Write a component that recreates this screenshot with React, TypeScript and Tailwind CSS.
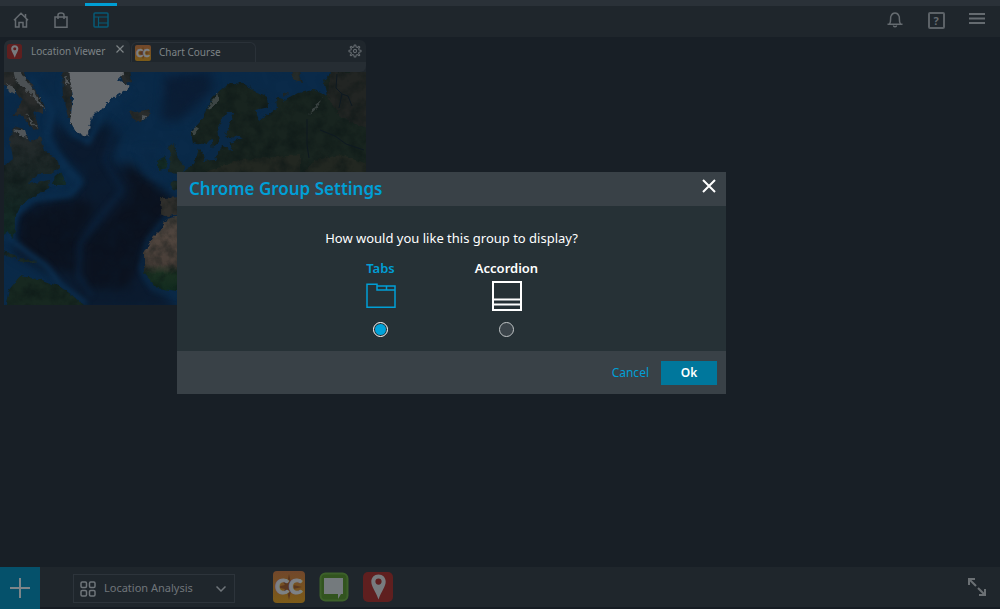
import { useState, type ReactNode } from "react";

function Pin({ className }: { className: string }) {
  return (
    <svg viewBox="0 0 30 30" className={className} aria-hidden="true">
      <rect width="30" height="30" rx="5" fill="#5f1f1f" />
      <path
        fillRule="evenodd"
        d="M15.5 2.5c-4.4 0-7.2 3.2-7.2 7.2 0 4.6 4.2 9.400 7.200 17.800 3-8.400 7.200-13.200 7.200-17.800 0-4-2.800-7.200-7.200-7.200zm0 4a3 3 0 1 1 0 6.200 3 3 0 0 1 0-6.200z"
        fill="#777b7e"
      />
    </svg>
  );
}

function ChartCourseIcon({ className }: { className: string }) {
  return (
    <svg viewBox="0 0 32 32" className={className} aria-hidden="true">
      <defs>
        <linearGradient id="cc" x1="0" y1="0" x2="0" y2="1">
          <stop offset="0" stopColor="#71472b" />
          <stop offset="1" stopColor="#7c5b18" />
        </linearGradient>
      </defs>
      <rect width="32" height="32" rx="4" fill="url(#cc)" />
      <path d="M16 3l2 9 6-4-4 6 9 2-9 2 4 6-6-4-2 9-2-9-6 4 4-6-9-2 9-2-4-6 6 4z" fill="#59371f" />
      <text
        x="16"
        y="23"
        textAnchor="middle"
        fontFamily="Lato, sans-serif"
        fontWeight="900"
        fontSize="21"
        fill="#7d8185"
        stroke="#7d8185"
        strokeWidth="1"
      >
        CC
      </text>
    </svg>
  );
}

function ChatIcon() {
  return (
    <svg viewBox="0 0 30 30" className="size-[30px]" aria-hidden="true">
      <rect x="1.500" y="1.500" width="27" height="27" rx="5" fill="#32541f" stroke="#3d612a" strokeWidth="2" />
      <path d="M5 6h19v16h-2l-3 5v-5H5z" fill="#747a7d" />
    </svg>
  );
}

function WorldMap() {
  return (
    <svg
      viewBox="4 72 362 233"
      preserveAspectRatio="xMinYMin slice"
      className="block w-full"
      role="img"
      aria-label="Satellite map of the North Atlantic"
    >
      <defs>
        <filter id="soft" x="-30%" y="-30%" width="160%" height="160%" colorInterpolationFilters="sRGB">
          <feGaussianBlur stdDeviation="5" />
        </filter>
        <filter id="softer" x="-30%" y="-30%" width="160%" height="160%" colorInterpolationFilters="sRGB">
          <feGaussianBlur stdDeviation="2.500" />
        </filter>
        <filter id="coast" x="-5%" y="-5%" width="110%" height="110%" colorInterpolationFilters="sRGB">
          <feTurbulence type="fractalNoise" baseFrequency="0.16" numOctaves="3" seed="4" result="n" />
          <feDisplacementMap in="SourceGraphic" in2="n" scale="5" xChannelSelector="R" yChannelSelector="G" result="d" />
          <feTurbulence type="fractalNoise" baseFrequency="0.08" numOctaves="4" seed="8" />
          <feColorMatrix values="0 0 0 0 0.04  0 0 0 0 0.08  0 0 0 0 0.08  0 1.200 0 0 -0.450" />
          <feComposite operator="in" in2="d" result="shade" />
          <feMerge>
            <feMergeNode in="d" />
            <feMergeNode in="shade" />
          </feMerge>
        </filter>
        <filter id="ice" x="-5%" y="-5%" width="110%" height="110%" colorInterpolationFilters="sRGB">
          <feTurbulence type="fractalNoise" baseFrequency="0.2" numOctaves="3" seed="4" result="n" />
          <feDisplacementMap in="SourceGraphic" in2="n" scale="6" xChannelSelector="R" yChannelSelector="G" />
        </filter>
        <filter id="sea" x="0" y="0" width="100%" height="100%" colorInterpolationFilters="sRGB">
          <feTurbulence type="fractalNoise" baseFrequency="0.05" numOctaves="5" seed="12" />
          <feColorMatrix values="0 0 0 0 0.04  0 0 0 0 0.14  0 0 0 0 0.23  0 1.200 0 0 -0.450" />
        </filter>
        <linearGradient id="canada" x1="0" y1="0" x2="0" y2="1">
          <stop offset="0" stopColor="#282c2e" />
          <stop offset="0.450" stopColor="#1a2625" />
          <stop offset="1" stopColor="#102b25" />
        </linearGradient>
        <linearGradient id="africa" x1="0" y1="0" x2="0" y2="1">
          <stop offset="0" stopColor="#3d3a36" />
          <stop offset="0.250" stopColor="#51463f" />
          <stop offset="0.640" stopColor="#483e38" />
          <stop offset="0.760" stopColor="#1a3021" />
          <stop offset="1" stopColor="#102a1e" />
        </linearGradient>
      </defs>

      <rect x="4" y="72" width="362" height="233" fill="#0a2a49" />
      <g filter="url(#soft)">
        <path d="M50 118L72 136L104 122L120 134L110 160L145 178L175 200L160 245L142 275L180 310L80 310L50 275L14 255L13 222L32 200L72 196L84 178L58 152Z" fill="#0b1a2e" />
        <path d="M18 215L70 198L95 205L80 240L80 275L50 268L20 250Z" fill="#0b121f" />
        <path d="M125 160L175 200L148 240L128 290L85 290L84 240L108 220L130 195Z" fill="#0b121f" />
        <path d="M165 76L210 72L212 90L180 120L162 120Z" fill="#0b1d35" />
      </g>
      <g filter="url(#softer)" fill="none" strokeLinejoin="round">
        <path d="M130 112L112 136L104 160L122 190L96 222L80 244L78 275L92 296" stroke="#0b2946" strokeWidth="5" opacity="0.450" />
        <path d="M160 150L140 150L148 172L166 180" stroke="#0b2c4b" strokeWidth="8" opacity="0.600" />
        <path d="M6 236L28 253L46 266L60 284L86 304" stroke="#0c2f50" strokeWidth="5" />
        <path d="M30 76L52 112L46 138L66 168L80 182L70 194L34 198L16 212L10 240" stroke="#0b2e4f" strokeWidth="6" />
        <path d="M168 215L148 240L141 268L152 288L177 294" stroke="#0b2946" strokeWidth="4" />
        <path d="M64 76L62 108L74 134L88 142L106 108L132 92" stroke="#0b2d4d" strokeWidth="6" />
      </g>
      <rect x="4" y="72" width="362" height="233" filter="url(#sea)" opacity="0.350" />

      <g filter="url(#coast)">
        <path d="M3 70L22 70L31 84L45 107L42 114L34 110L39 130L30 127L21 114L13 116L22 101L14 90L3 84Z" fill="#292b2b" />
        <path d="M13 127L24 130L30 142L40 137L44 151L56 158L60 167L50 174L38 174L27 184L41 182L50 180L49 188L34 196L21 205L15 218L14 240L8 232L2 236L2 168L13 158L10 140Z" fill="url(#canada)" />
        <path d="M53 185L55 176L61 171L66 185Z" fill="#132a27" />
        <path d="M62 70L72 70L72 126L66 110L63 96Z" fill="#262a2b" />
        <path d="M118 70L130 70L132 82L124 84Z" fill="#262a2b" />
        <path d="M129 110L136 112L150 109L149 117L140 122L132 119Z" fill="#292c2c" />
        <path d="M168 148L174 143L176 156L184 166L182 173L168 172L172 160Z" fill="#1b2925" />
        <path d="M158 160L166 156L167 168L158 171Z" fill="#132b25" />
        <path d="M160 198L184 197L184 214L168 216L161 213Z" fill="#302f2c" />
        <path d="M170 184L184 174L184 192L174 190Z" fill="#1a2a26" />
        <path d="M167 219L184 215L184 292L157 288L144 273L144 252L153 237L162 228Z" fill="url(#africa)" />
        <path d="M5 308L9 290L20 276L42 280L60 287L72 295L86 308Z" fill="#172820" />
        <path d="M3 250L14 255L18 259L6 256Z M19 258L38 261L30 263L18 261Z" fill="#1b2b28" />
        <path d="M191 132L200 122L213 97L230 83L243 84L267 98L268 107L256 110L260 120L277 108L276 97L286 100L299 93L313 90L328 96L324 80L333 70L370 70L370 310L185 310L178 176L194 164L199 149L205 157L213 151L212 140L203 145L193 143Z" fill="#18241f" />
        <path d="M291 72L299 72L303 83L294 80Z M284 92L288 94L284 97Z" fill="#252b29" />
        <path d="M330 72L368 72L368 130L340 116L328 96Z" fill="#222523" />
        <path d="M304 172L315 160L340 155L368 164L368 176Z M205 172L240 160L300 155L300 174Z" fill="#262922" opacity="0.700" />
      </g>
      <g filter="url(#ice)">
        <path d="M227 112L234 112L229 126L225 137L242 138L230 143L231 151L222 146L215 160L203 161L210 150L219 142L217 128Z" fill="#0a2947" />
        <path d="M69 70L127 70L118 80L131 87L111 99L101 110L92 115L87 138L76 132L70 122L73 98Z" fill="#65696d" />
        <path d="M13 70L22 72L38 98L46 110L39 104L27 90L16 82Z M6 82L17 91L14 94L6 89Z M26 113L39 130L31 123Z" fill="#4b5053" />
        <path d="M141 116L147 117L142 121Z M65 76L69 82L66 86Z M13 129L25 131L27 137L20 135Z" fill="#505559" />
      </g>
      <g filter="url(#ice)" opacity="0.700">
        <path d="M217 93L219 99L212 110L208 109Z M192 130L199 127L196 136L193 136Z" fill="#4e5555" />
        <path d="M323 99L316 109L309 115L314 107Z" fill="#4a5151" />
      </g>
      <path d="M337 74L336 88L342 94L339 108M342 94L348 96L352 106M320 130L335 136L346 144L364 150M307 119L307 145L309 158" fill="none" stroke="#0e1921" strokeWidth="1" />
    </svg>
  );
}

function NavButton({ label, active, children }: { label: string; active?: boolean; children: ReactNode }) {
  return (
    <button
      type="button"
      aria-label={label}
      className={`relative flex h-7 w-8 items-center justify-center ${active ? "text-[#075a76]" : "text-[#656b70]"}`}
    >
      {active && <span className="absolute inset-x-0 -top-[3px] h-[3px] bg-[#009ed4]" />}
      {children}
    </button>
  );
}

const stroke = { fill: "none", stroke: "currentColor", strokeWidth: 1.5 };

function TopBar() {
  return (
    <header className="flex h-[37px] items-start justify-between border-t-[6px] border-[#2a3138] bg-[#1f262c] pr-[7px] pl-[5px]">
      <nav className="flex gap-2" aria-label="Main">
        <NavButton label="Home">
          <svg viewBox="0 0 16 16" className="size-4" {...stroke}>
            <path d="M1 8.200L8 1.200L15 8.200M2.500 7V15H6V10.500H10V15H13.500V7M12.500 5.500V2" />
          </svg>
        </NavButton>
        <NavButton label="Store">
          <svg viewBox="0 0 16 16" className="size-4" {...stroke}>
            <path d="M2 5H14V15.200H2ZM5 7V3C5 .2 11 .2 11 3V7" />
          </svg>
        </NavButton>
        <NavButton label="Workspace" active>
          <svg viewBox="0 0 16 16" className="size-4" {...stroke}>
            <rect x="1" y="1" width="14" height="14" rx="1" />
            <path d="M1 5H15M5.500 5V15M5.500 11H15" strokeWidth="1.200" />
          </svg>
        </NavButton>
      </nav>
      <div className="flex gap-[9px]">
        <NavButton label="Notifications">
          <svg viewBox="0 0 16 16" className="size-4" {...stroke}>
            <path d="M.5 12.200H15.500M2.500 12C4.500 9.500 3 6 4 4C5 1.500 6.200 1 8 1C9.800 1 11 1.500 12 4C13 6 11.500 9.500 13.500 12M6.500 13.500C6.500 15.300 9.500 15.300 9.500 13.500" />
          </svg>
        </NavButton>
        <NavButton label="Help">
          <span className="flex size-[17px] items-center justify-center rounded-xs border-2 border-[#5c6267] text-[11px] leading-none font-bold">
            ?
          </span>
        </NavButton>
        <NavButton label="Menu">
          <svg viewBox="0 0 16 16" className="mb-1 size-4" fill="currentColor">
            <path d="M0 3h16v2H0zM0 7.500h16v2H0zM0 12h16v2H0z" />
          </svg>
        </NavButton>
      </div>
    </header>
  );
}

function GroupWindow() {
  return (
    <section className="mt-[3px] ml-1 w-[362px] max-w-full overflow-hidden rounded-t-md bg-[#1f262c] text-[10px] text-[#7d8386]">
      <div className="flex h-[22px]">
        <div className="flex w-[126px] items-center rounded-t-md bg-[#262d33] pr-1.5 pl-[3px]">
          <Pin className="size-[15px]" />
          <span className="ml-[9px] flex-1 whitespace-nowrap">Location Viewer</span>
          <button type="button" aria-label="Close Location Viewer" className="mb-1">
            <svg viewBox="0 0 8 8" className="size-2" {...stroke}>
              <path d="M.5 .5L7.500 7.500M7.500 .5L.5 7.500" strokeWidth="1.200" />
            </svg>
          </button>
        </div>
        <button
          type="button"
          className="mt-0.5 ml-px flex w-[125px] items-center rounded-t-md border border-b-0 border-[#2a3138] pl-[3px]"
        >
          <ChartCourseIcon className="size-4" />
          <span className="ml-2">Chart Course</span>
        </button>
        <button type="button" aria-label="Group settings" className="mr-1 ml-auto">
          <svg viewBox="0 0 14 14" className="h-[14px] w-[14px]" fill="none" stroke="#63696e" strokeWidth="1.100" strokeLinejoin="round">
            <path d="M6.300 1H7.700L8.200 3L9.400 3.500L11 2.300L11.800 3.200L10.600 4.800L11.100 6L13 6.300V7.700L11.100 8.200L10.600 9.400L11.800 11L11 11.800L9.400 10.600L8.200 11.100L7.700 13H6.300L5.800 11.100L4.600 10.600L3 11.800L2.200 11L3.400 9.400L2.900 8.200L1 7.700V6.300L2.900 6L3.400 4.800L2.200 3.200L3 2.300L4.600 3.500L5.800 3Z" />
            <circle cx="7" cy="7" r="1.600" />
          </svg>
        </button>
      </div>
      <div className="h-2.5 rounded-br-md bg-[#262d33]" />
      <WorldMap />
    </section>
  );
}

function BottomBar() {
  return (
    <footer className="flex h-[42px] items-center border-b-2 border-[#161c23] bg-[#1f262c]">
      <button type="button" aria-label="Add" className="-mb-0.5 flex h-[42px] w-10 items-center justify-center bg-[#05516b] text-[#7d8589]">
        <svg viewBox="0 0 20 20" className="size-5" fill="none" stroke="currentColor" strokeWidth="2">
          <path d="M10 0V20M0 10H20" />
        </svg>
      </button>
      <button
        type="button"
        className="mt-[3px] ml-[33px] flex h-[29px] w-[162px] items-center border border-[#2d343b] pr-2 pl-1.5 text-[11px] text-[#6f757a]"
      >
        <svg viewBox="0 0 16 16" className="size-4" {...stroke}>
          <rect x="1" y="1" width="5.500" height="5.500" rx="1.200" />
          <rect x="9.500" y="1" width="5.500" height="5.500" rx="1.200" />
          <rect x="1" y="9.500" width="5.500" height="5.500" rx="1.200" />
          <rect x="9.500" y="9.500" width="5.500" height="5.500" rx="1.200" />
        </svg>
        <span className="ml-2 flex-1 text-left whitespace-nowrap">Location Analysis</span>
        <svg viewBox="0 0 10 6" className="h-1.5 w-2.5" {...stroke}>
          <path d="M.5 .5L5 5L9.500 .5" />
        </svg>
      </button>
      <div className="ml-[38px] flex items-center gap-3.5">
        <button type="button" aria-label="Chart Course"><ChartCourseIcon className="size-8" /></button>
        <button type="button" aria-label="Chat"><ChatIcon /></button>
        <button type="button" aria-label="Location Viewer"><Pin className="size-[30px]" /></button>
      </div>
      <button type="button" aria-label="Full screen" className="mr-3.5 ml-auto text-[#6b7074]">
        <svg viewBox="0 0 18 18" className="h-[18px] w-[18px]" fill="none" stroke="currentColor" strokeWidth="2">
          <path d="M1 7V1H7M1 1L8 8M17 11V17H11M17 17L10 10" />
        </svg>
      </button>
    </footer>
  );
}

function DisplayOption({
  label,
  checked,
  onSelect,
  children,
}: {
  label: string;
  checked: boolean;
  onSelect: () => void;
  children: ReactNode;
}) {
  return (
    <label
      className={`flex w-[126px] cursor-pointer flex-col items-center text-[13px] leading-5 font-semibold ${checked ? "text-[#009fd6]" : "text-white"}`}
    >
      {label}
      <span className="mt-0.5 flex h-8 items-center">{children}</span>
      <input
        type="radio"
        name="display"
        checked={checked}
        onChange={onSelect}
        className={`mt-2.5 size-[15px] appearance-none rounded-full border bg-clip-content ${checked ? "border-white bg-[#00a3da] p-px" : "border-[#c5c9cb] bg-[#3b444a]"}`}
      />
    </label>
  );
}

function SettingsDialog() {
  const [mode, setMode] = useState<"tabs" | "accordion">("tabs");
  return (
    <div
      role="dialog"
      aria-modal="true"
      aria-labelledby="dialog-title"
      className="w-[549px] max-w-full bg-[#263136] text-white"
    >
      <div className="flex h-[34px] items-center justify-between bg-[#394147] pr-2.5 pl-3">
        <h2 id="dialog-title" className="text-[17px] font-semibold text-[#009fd6]">
          Chrome Group Settings
        </h2>
        <button type="button" aria-label="Close" className="mb-1.5">
          <svg viewBox="0 0 14 14" className="h-[14px] w-[14px]" fill="none" stroke="currentColor" strokeWidth="2">
            <path d="M1 1L13 13M13 1L1 13" />
          </svg>
        </button>
      </div>
      <div role="radiogroup" aria-labelledby="display-question" className="flex flex-col items-center pt-[22px] pb-3.5">
        <p id="display-question" className="text-[13px] leading-5">
          How would you like this group to display?
        </p>
        <div className="mt-2.5 mr-4 flex">
          <DisplayOption label="Tabs" checked={mode === "tabs"} onSelect={() => setMode("tabs")}>
            <svg viewBox="0 0 30 26" className="h-[26px] w-[30px]" fill="none" stroke="currentColor" strokeWidth="1.500">
              <path d="M11 3V1.200H1V24.200H29V3H11V7H29M20.500 3V7" />
            </svg>
          </DisplayOption>
          <DisplayOption label="Accordion" checked={mode === "accordion"} onSelect={() => setMode("accordion")}>
            <svg viewBox="0 0 30 30" className="h-[30px] w-[30px]" fill="none" stroke="currentColor" strokeWidth="2">
              <path d="M1 1H29V29H1ZM1 18.500H29M1 23.500H29" />
            </svg>
          </DisplayOption>
        </div>
      </div>
      <div className="flex h-[43px] items-center justify-end gap-3 bg-[#394147] pr-[9px] text-xs">
        <button type="button" className="text-[#009fd6]">Cancel</button>
        <button type="button" className="h-6 w-14 bg-[#00779c] font-semibold">Ok</button>
      </div>
    </div>
  );
}

export default function App() {
  return (
    <div className="flex min-h-screen flex-col bg-[#181f26] font-['Noto_Sans',sans-serif]">
      <TopBar />
      <main className="flex-1">
        <GroupWindow />
      </main>
      <BottomBar />
      <div className="fixed inset-0 flex items-center justify-center pr-[97px] pb-[43px]">
        <SettingsDialog />
      </div>
    </div>
  );
}
